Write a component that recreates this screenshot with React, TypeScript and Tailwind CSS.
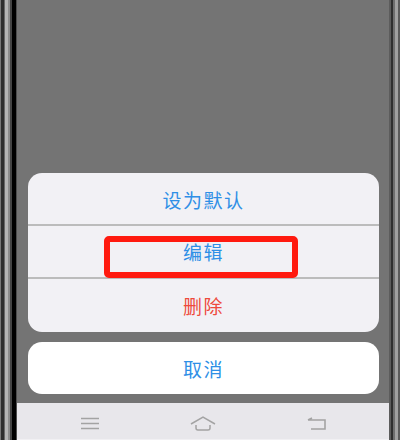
import React from "react";

const FONT = "font-['Noto_Sans_CJK_SC','Noto_Sans',sans-serif]";

const LeftBezel: React.FC = () => (
  <div className="flex shrink-0 h-full">
    <div className="w-[1px] bg-[#777777]" />
    <div className="w-[3px] bg-[#2e2e2e]" />
    <div className="w-[1px] bg-[#666666]" />
    <div className="w-[3px] bg-[#b4b4b4]" />
    <div className="w-[2px] bg-[#8c8c8c]" />
    <div className="w-[2px] bg-[#444444]" />
    <div className="w-[4px] bg-[#000000]" />
    <div className="w-[1px] bg-[#4d4d4d]" />
  </div>
);

const RightBezel: React.FC = () => (
  <div className="flex shrink-0 h-full">
    <div className="w-[2px] bg-[#5c5c5c]" />
    <div className="w-[2px] bg-[#2f2f2f]" />
    <div className="w-[2px] bg-[#6e6e6e]" />
    <div className="w-[3px] bg-[#a0a0a0]" />
    <div className="w-[2px] bg-[#5a5a5a]" />
  </div>
);

export default function App() {
  return (
    <div className={`relative flex w-[400px] h-[440px] overflow-hidden bg-[#747474] ${FONT}`}>
      <LeftBezel />
      <div className="flex-1 flex flex-col">
        <div className="flex-1 flex flex-col justify-end pl-[11px] pr-[10px]">
          {/* action sheet */}
          <div className="rounded-[14px] bg-[#f2f1f5] flex flex-col text-[19px] text-[#2f8fe6]">
            <div className="h-[51px] pt-[3px] flex items-center justify-center tracking-[1.5px]">设为默认</div>
            <div className="h-[2px] bg-[#bcbcbc]" />
            <div className="h-[51px] pt-[2px] flex items-center justify-center tracking-[1.5px]">编辑</div>
            <div className="h-[2px] bg-[#bcbcbc]" />
            <div className="h-[53px] pt-[2px] flex items-center justify-center tracking-[1.5px] text-[#ee4a3c]">删除</div>
          </div>
          <div className="mt-[10px] mb-[9px] h-[52px] pt-[2px] rounded-[14px] bg-white flex items-center justify-center text-[19px] tracking-[1.5px] text-[#2f8fe6]">
            取消
          </div>
        </div>
        {/* nav bar */}
        <div className="h-[37px] bg-[#e8e7eb] border-b border-[#f1f0f3] grid grid-cols-3 items-center justify-items-center px-[16px] pt-[4px]">
          <svg width="18" height="13" viewBox="0 0 18 13" fill="none" stroke="#a3a3a3" strokeWidth="1.7">
            <path d="M0 1.500h18M0 6.500h18M0 11.500h18" />
          </svg>
          <svg width="26" height="15" viewBox="0 0 26 15" fill="none" stroke="#a3a3a3" strokeWidth="1.5">
            <path d="M1 8 13 1l12 7M6 9v3q0 2 2 2h10q2 0 2-2V9" />
          </svg>
          <svg width="19" height="13" viewBox="0 0 19 13" fill="none" stroke="#a3a3a3" strokeWidth="1.6">
            <path d="M1 3h17v9H4M1 3l4-2" />
          </svg>
        </div>
      </div>
      <RightBezel />
      {/* red highlight */}
      <div className="absolute left-[104px] top-[236px] w-[194px] h-[42px] rounded-[5px] border-[6px] border-[#ff1a0f]" />
    </div>
  );
}
